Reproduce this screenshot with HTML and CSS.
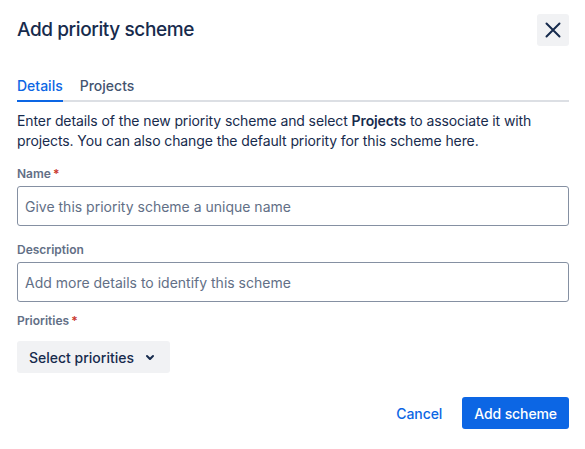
FILE: index.html
```html
<!DOCTYPE html>
<html lang="en">
<head>
    <meta charset="UTF-8">
    <meta name="viewport" content="width=device-width, initial-scale=1.0">
    <title>Add priority scheme</title>
    <link rel="stylesheet" href="styles.css">
</head>
<body>
    <div class="modal">
        <div class="head flex">
            <h1>Add priority scheme</h1>
            <button class="close" aria-label="Close">
                <svg width="16" height="16" viewBox="0 0 16 16"><path d="M1.5 1.5l13 13M14.5 1.5l-13 13" stroke="#172B4D" stroke-width="2" stroke-linecap="round"/></svg>
            </button>
        </div>

        <div class="tabs flex">
            <div class="tab active">Details</div>
            <div class="tab">Projects</div>
        </div>

        <p class="intro">Enter details of the new priority scheme and select <b>Projects</b> to associate it with projects. You can also change the default priority for this scheme here.</p>

        <label class="lbl">Name<span class="req">*</span></label>
        <input class="field" type="text" placeholder="Give this priority scheme a unique name">

        <label class="lbl">Description</label>
        <input class="field" type="text" placeholder="Add more details to identify this scheme">

        <label class="lbl lbl-pri">Priorities<span class="req">*</span></label>
        <button class="picker flex">
            Select priorities
            <svg width="24" height="24" viewBox="0 0 24 24"><path d="M8.292 10.293a1.009 1.009 0 000 1.419l2.939 2.965c.218.215.5.322.779.322s.556-.107.769-.322l2.93-2.955a1.01 1.01 0 000-1.419.987.987 0 00-1.406 0l-2.298 2.317-2.307-2.327a.99.99 0 00-1.406 0z" fill="#172B4D"/></svg>
        </button>

        <div class="foot flex">
            <button class="btn link">Cancel</button>
            <button class="btn primary">Add scheme</button>
        </div>
    </div>
</body>
</html>
```

FILE: styles.css
```css
*{margin:0px;padding:0px;box-sizing:border-box;font-family:Inter,"Noto Sans",Arial,sans-serif;}

body{background:#fff;color:#172B4D;}

.flex{display:flex;align-items:center;}

.modal{padding:14px 16px 0px 17px;display:flex;flex-direction:column;align-items:flex-start;}

.head{width:100%;justify-content:space-between;}
.head h1{font-size:19px;font-weight:500;line-height:24px;letter-spacing:-0.4px;}

.close{
    width:32px;height:32px;border:none;border-radius:3px;
    background:#F1F2F4;display:flex;justify-content:center;align-items:center;
}

.tabs{width:100%;margin-top:30px;gap:17px;border-bottom:2px solid #DCDFE4;}
.tab{font-size:14px;font-weight:500;color:#44546F;line-height:20px;padding-bottom:4px;margin-bottom:-2px;border-bottom:2px solid transparent;}
.tab.active{color:#0C66E4;border-color:#0C66E4;}

.intro{font-size:14px;line-height:20px;margin-top:9px;letter-spacing:-0.1px;}
.intro b{font-weight:600;}

.lbl{font-size:12px;font-weight:600;line-height:16px;color:#626F86;margin-top:15px;margin-bottom:4px;}
.req{color:#C9372C;margin-left:2px;}

.field{
    width:100%;height:40px;border:1px solid #8590A2;border-radius:3px;
    padding:0px 7px;font-size:14px;color:#172B4D;outline:none;
}
.field::placeholder{color:#626F86;}
.field + .lbl{margin-top:16px;}
.field + .lbl-pri{margin-top:11px;}

.picker{
    height:32px;border:none;border-radius:3px;background:#F1F2F4;
    padding:0px 8px 0px 12px;gap:4px;margin-top:8px;
    font-size:14px;font-weight:500;color:#172B4D;
}

.foot{width:100%;justify-content:flex-end;gap:8px;margin-top:24px;}
.btn{height:32px;border:none;border-radius:3px;padding:0px 12px;font-size:14px;font-weight:500;background:none;letter-spacing:-0.1px;}
.btn.link{color:#0C66E4;}
.btn.primary{background:#0C66E4;color:#fff;}
```
